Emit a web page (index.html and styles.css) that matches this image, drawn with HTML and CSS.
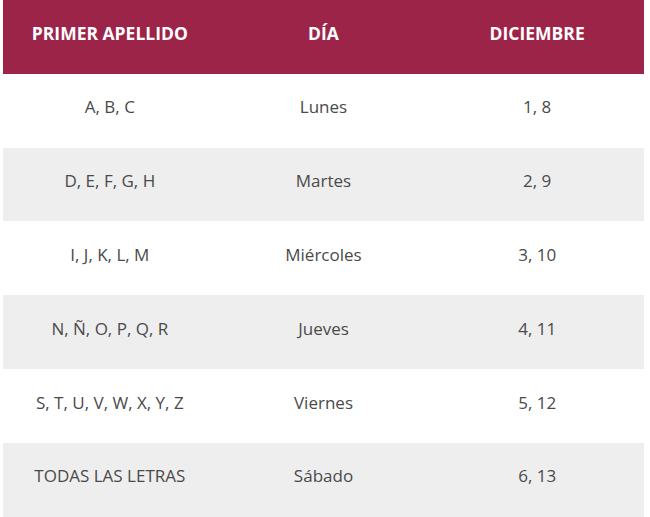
FILE: index.html
```html
<!DOCTYPE html>
<html lang="es">
<head>
<meta charset="utf-8">
<link rel="stylesheet" href="styles.css">
</head>
<body>
<table class="schedule">
  <thead>
    <tr><th>PRIMER APELLIDO</th><th>DÍA</th><th>DICIEMBRE</th></tr>
  </thead>
  <tbody>
    <tr><td>A, B, C</td><td>Lunes</td><td>1, 8</td></tr>
    <tr><td>D, E, F, G, H</td><td>Martes</td><td>2, 9</td></tr>
    <tr><td>I, J, K, L, M</td><td>Miércoles</td><td>3, 10</td></tr>
    <tr><td>N, Ñ, O, P, Q, R</td><td>Jueves</td><td>4, 11</td></tr>
    <tr><td>S, T, U, V, W, X, Y, Z</td><td>Viernes</td><td>5, 12</td></tr>
    <tr><td>TODAS LAS LETRAS</td><td>Sábado</td><td>6, 13</td></tr>
  </tbody>
</table>
</body>
</html>
```
FILE: styles.css
```css
html, body {
  margin: 0;
  padding: 0;
  background: #ffffff;
}
body {
  font-family: "Open Sans", "Liberation Sans", sans-serif;
}
.schedule {
  margin-left: 3px;
  width: 641px;
  border-collapse: collapse;
  table-layout: fixed;
}
.schedule th,
.schedule td {
  text-align: center;
  height: 73.83px;
  padding: 0 0 8px 0;
  box-sizing: border-box;
  vertical-align: middle;
  font-size: 17px;
}
.schedule th {
  background: #9d2449;
  color: #ffffff;
  font-weight: 700;
  font-size: 17.5px;
}
.schedule td {
  color: #4a4a4a;
  font-weight: 400;
}
.schedule tbody tr:nth-child(even) td {
  background: #eeeeee;
}
```
